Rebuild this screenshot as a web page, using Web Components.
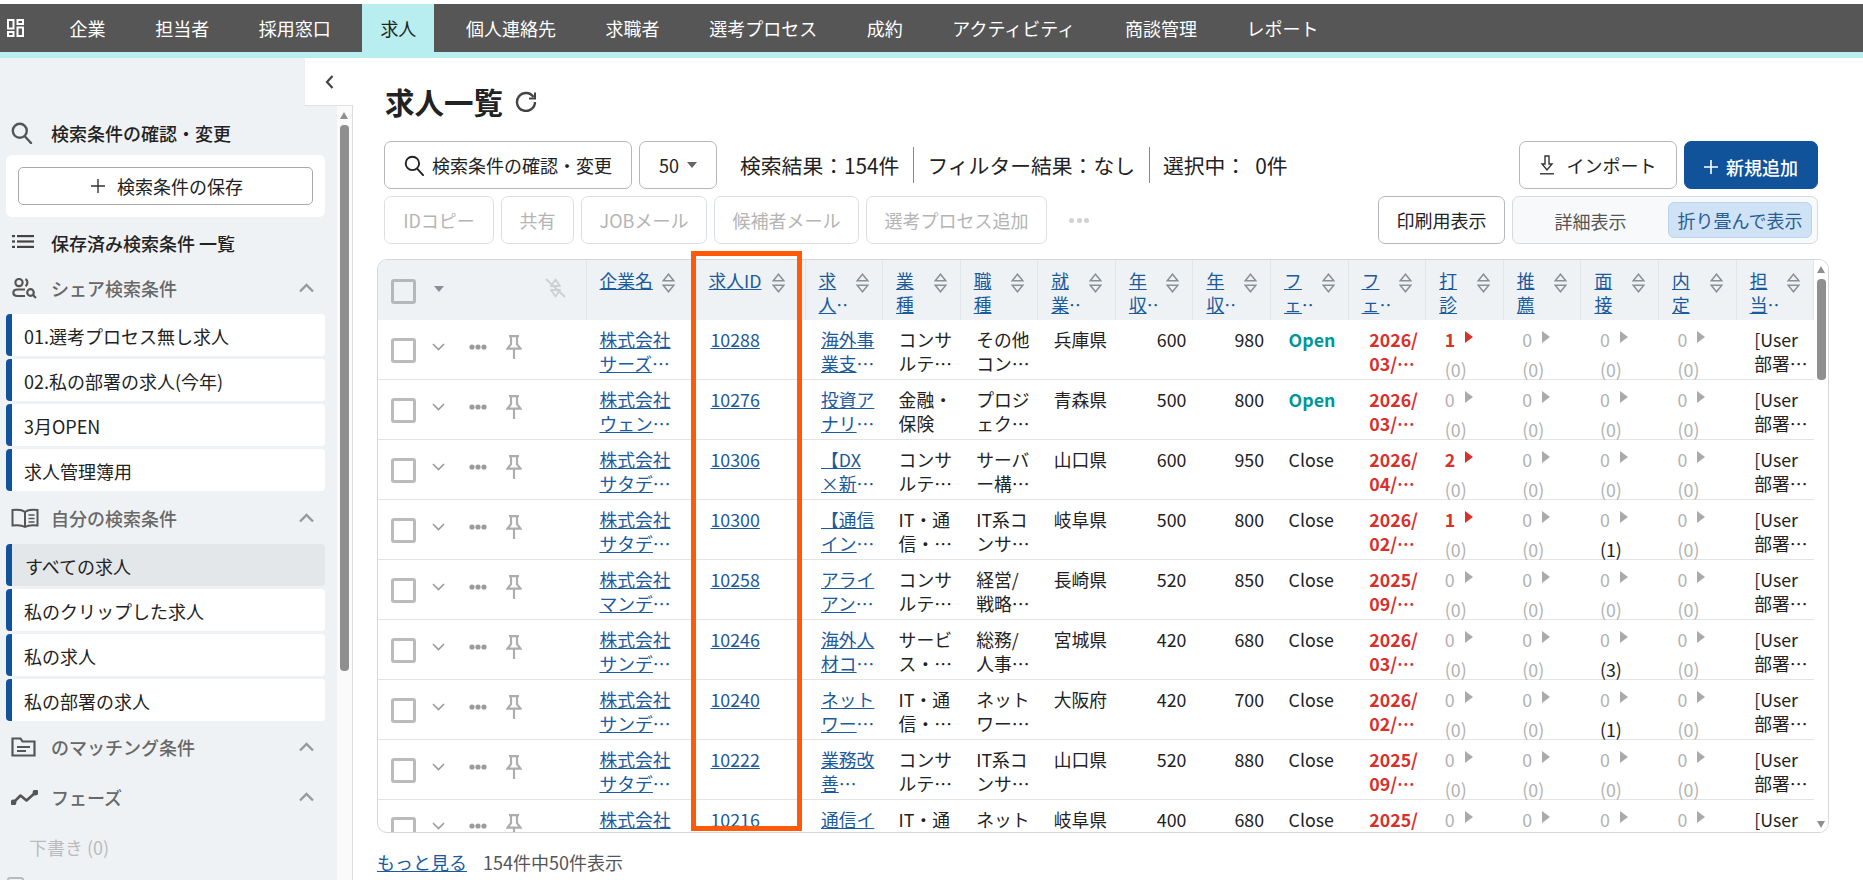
<!DOCTYPE html>
<html lang="ja">
<head>
<meta charset="utf-8">
<title>求人一覧</title>
<style>
  html, body { margin: 0; height: 880px; overflow: hidden; background: #fff; }
  body { font: 17.8px/24px "Noto Sans CJK JP", "Noto Sans", sans-serif; color: #222; }
</style>
</head>
<body>
<app-shell></app-shell>

<script>
const SEARCH_ICON = `<svg width="22" height="22" viewBox="0 0 22 22" fill="none" stroke="currentColor" stroke-width="2.4"><circle cx="8.8" cy="8.8" r="7"/><path d="M14 14.5l6 6.5" stroke-linecap="round"/></svg>`;
const CHEVRON_UP = `<svg width="15" height="10" viewBox="0 0 15 10" fill="none" stroke="#999" stroke-width="2.4"><path d="M1 8.5L7.5 2 14 8.5"/></svg>`;

const define = (tag, html, setup) => {
  customElements.define(tag, class extends HTMLElement {
    connectedCallback() {
      if (this.shadowRoot) return;
      this.attachShadow({ mode: "open" }).innerHTML = html;
      if (setup) setup(this);
    }
  });
};

define("nav-tab", `<style>
  :host { display: flex; align-items: center; padding: 0 18px; font-size: 18px; color: #fff; white-space: nowrap; }
  :host([active]) { background: #b8eef0; color: #222; }
</style><slot></slot>`);

define("top-nav", `<style>
  :host { display: flex; height: 48px; margin-top: 4px; background: #565656; border-bottom: 6px solid #b8eef0; gap: 13.6px; }
  .grid { display: flex; align-items: center; width: 45px; padding-left: 7px; margin-right: -7px; box-sizing: border-box; }
</style>
<div class="grid"><svg width="17" height="18" viewBox="0 0 17 18" fill="none" stroke="#fff" stroke-width="2"><rect x="1" y="1" width="5.5" height="8.5"/><rect x="10.5" y="1" width="5.5" height="4"/><rect x="1" y="13" width="5.5" height="4"/><rect x="10.5" y="8.5" width="5.5" height="8.5"/></svg></div>
<slot></slot>`);

define("side-head", `<style>
  :host { display: flex; align-items: center; height: 24px; padding: 0 23px 0 10px; font-weight: 500; color: #222; }
  :host([muted]) { color: #686868; }
  .icon { width: 41px; display: flex; align-items: center; padding-left: 1px; box-sizing: border-box; color: #555; flex: none; }
  .txt { flex: 1; white-space: nowrap; }
  .arrow { display: none; line-height: 0; }
  :host([muted]) .arrow { display: block; }
</style>
<div class="icon"><slot name="icon"></slot></div>
<div class="txt"><slot></slot></div>
<div class="arrow">${CHEVRON_UP}</div>`);

define("side-item", `<style>
  :host { display: flex; align-items: center; height: 42px; margin: 0 12px 3px 6px; padding-left: 12px; background: #fff; border-left: 6px solid #11539b; border-radius: 4px; white-space: nowrap; padding-top: 1px; box-sizing: border-box; }
  :host([active]) { background: #e4e7ea; padding-left: 13px; }
</style><slot></slot>`);

define("side-bar", `<style>
  :host { display: flex; width: 353px; flex: none; position: relative; height: 822px; overflow: hidden; font-size: 18px; }
  .body { width: 337px; flex: none; background: #eff2f5; padding-top: 63px; box-sizing: border-box; }
  .card { margin: 10px 12px 14px 6px; padding: 12px; height: 62px; box-sizing: border-box; background: #fff; border-radius: 6px; }
  .save { display: flex; align-items: center; justify-content: center; gap: 12px; height: 38px; padding-left: 5px; border: 1px solid #aaa; border-radius: 5px; box-sizing: border-box; }
  .save svg { margin-left: -2px; }
  .mt-1 { margin-top: 21px; margin-bottom: 14px; }
  .mt-2 { margin-top: 15px; margin-bottom: 14px; }
  .mt-3 { margin-top: 14px; }
  .mt-4 { margin-top: 26px; }
  .draft { margin: 26px 0 0 29px; color: #bbb; }
  .clip { margin: 18px 0 0 7px; width: 17px; height: 17px; box-sizing: border-box; border: 2px solid #bbb; border-radius: 3px; }
  .track { width: 16px; background: #fafafa; border-right: 1px solid #ddd; position: relative; display: flex; flex-direction: column; align-items: center; margin-top: 48px; box-sizing: border-box; padding-right: 1px; }
  .up { width: 0; height: 0; border: 4.5px solid transparent; border-top: 0; border-bottom: 7px solid #8f8f8f; margin-top: 6px; }
  .thumb { width: 9px; height: 546px; margin-top: 6px; background: #8f8f8f; border-radius: 4px; }
  .tab { position: absolute; left: 304px; top: 0; width: 49px; height: 48px; background: #fff; border-left: 1px solid #eee; border-bottom: 1px solid #e2e2e2; display: flex; align-items: center; justify-content: center; box-sizing: border-box; }
  svg { display: block; }
</style>
<div class="body">
  <side-head><span slot="icon">${SEARCH_ICON}</span>検索条件の確認・変更</side-head>
  <div class="card"><div class="save">
    <svg width="14" height="14" viewBox="0 0 14 14" stroke="#333" stroke-width="1.4"><path d="M7 0v14M0 7h14"/></svg><span>検索条件の保存</span>
  </div></div>
  <side-head><svg slot="icon" style="margin:-4px 0 0 1px" width="22" height="13" viewBox="0 0 22 13" fill="#444"><rect x="0" y="0" width="3" height="2.2"/><rect x="5" y="0" width="17" height="2.2"/><rect x="0" y="5.4" width="3" height="2.2"/><rect x="5" y="5.4" width="17" height="2.2"/><rect x="0" y="10.8" width="3" height="2.2"/><rect x="5" y="10.8" width="17" height="2.2"/></svg>保存済み検索条件 一覧</side-head>
  <side-head class="mt-1" muted><svg slot="icon" style="margin-left:1px" width="25" height="21" viewBox="0 0 25 21" fill="none" stroke="#555" stroke-width="2.2"><circle cx="7" cy="4.6" r="3.6"/><path d="M13.5 1c2.6 1.6 2.6 5.6 0 7.2"/><path d="M13 11.5H5.5c-5.5 0-5.5 6.5 0 6.5H13"/><circle cx="18.5" cy="14.5" r="3.3"/><path d="M21 17l3 3"/></svg>シェア検索条件</side-head>
  <side-item>01.選考プロセス無し求人</side-item>
  <side-item>02.私の部署の求人(今年)</side-item>
  <side-item>3月OPEN</side-item>
  <side-item>求人管理簿用</side-item>
  <side-head class="mt-2" muted><svg slot="icon" width="28" height="20" viewBox="0 0 28 20" fill="none" stroke="#555" stroke-width="2"><path d="M14 4C11 1.5 6 1.5 1.5 2v15.5c4.5-.5 9.5-.5 12.5 1.5 3-2 8-2 12.5-1.5V2C22 1.5 17 1.5 14 4zM14 4v15"/><path d="M17.5 7h6M17.5 10.5h6M17.5 14h6" stroke-width="1.5"/></svg>自分の検索条件</side-head>
  <side-item active>すべての求人</side-item>
  <side-item>私のクリップした求人</side-item>
  <side-item>私の求人</side-item>
  <side-item>私の部署の求人</side-item>
  <side-head class="mt-3" muted><svg slot="icon" width="25" height="20" viewBox="0 0 25 20" fill="none" stroke="#555" stroke-width="2.2"><path d="M1.5 18.5V1.5h8l2 3h12v14z"/><path d="M6 10h13M6 14h9"/></svg>のマッチング条件</side-head>
  <side-head class="mt-4" muted><svg slot="icon" width="27" height="15" viewBox="0 0 27 15" fill="none" stroke="#555" stroke-width="2.6" stroke-linejoin="round"><path d="M2.5 12.5l7-7 6 5 9-8"/><circle cx="2.5" cy="12.5" r="1.6" fill="#555"/><circle cx="24.5" cy="2.5" r="1.6" fill="#555"/></svg>フェーズ</side-head>
  <div class="draft">下書き (0)</div>
  <div class="clip"></div>
</div>
<div class="track"><div class="up"></div><div class="thumb"></div></div>
<div class="tab"><svg width="9" height="14" viewBox="0 0 9 14" fill="none" stroke="#444" stroke-width="2.2"><path d="M7.5 1L2 7l5.5 6"/></svg></div>`);

define("tool-btn", `<style>
  :host { display: inline-flex; align-items: center; justify-content: center; gap: 7px; height: 48px; box-sizing: border-box; border: 1px solid #b4b8bc; border-radius: 7px; background: #fff; white-space: nowrap; color: #222; flex: none; font-size: 18px; }
  :host([disabled]) { border-color: #dcdfe2; color: #b4b4b4; }
  :host([primary]) { background: #11539b; border-color: #11539b; color: #fff; font-weight: 500; }
  svg { display: block; }
</style><slot></slot>`);

define("view-toggle", `<style>
  :host { display: flex; align-items: center; width: 306px; height: 48px; box-sizing: border-box; border: 1px solid #d6dadd; border-radius: 7px; background: #f8f9fa; flex: none; font-size: 18px; }
  .off { width: 155px; text-align: center; color: #555; padding-top: 2px; }
  .on { width: 144px; height: 36px; line-height: 34px; box-sizing: border-box; text-align: center; color: #2a5d94; background: #cfe2f6; border: 1px solid #b8d4f0; border-radius: 6px; white-space: nowrap; }
</style><div class="off">詳細表示</div><div class="on">折り畳んで表示</div>`);

define("job-toolbar", `<style>
  :host { display: block; padding-left: 7px; padding-right: 45px; }
  .row { display: flex; align-items: center; gap: 7px; }
  .row + .row { margin-top: 7px; }
  .stat { display: flex; align-items: center; margin-left: 16px; flex: 1; white-space: nowrap; font-size: 20.8px; }
  .stat > span { padding: 0 14px 0 0; }
  .stat > span + span { padding-left: 13px; border-left: 1px solid #888; line-height: 36px; }
  .z { margin-left: 9px; }
  .dots { display: flex; gap: 2.5px; margin-left: 15px; flex: 1; }
  .dots i { width: 5px; height: 5px; border-radius: 50%; background: #d2d2d2; }
  .tri { width: 0; height: 0; border: 5px solid transparent; border-top: 6px solid #666; border-bottom: 0; margin-left: 1px; }
</style>
<div class="row">
  <tool-btn style="width:248px">${SEARCH_ICON.replace('width="22" height="22"', 'width="21" height="21"').replace('stroke-width="2.4"', 'stroke-width="2"')}検索条件の確認・変更</tool-btn>
  <tool-btn style="width:78px">50<span class="tri"></span></tool-btn>
  <div class="stat"><span>検索結果：154件</span><span>フィルター結果：なし</span><span>選択中：<span class="z">0件</span></span></div>
  <tool-btn style="width:158px;gap:13px"><svg width="14" height="20" viewBox="0 0 14 20" fill="none" stroke="#333" stroke-width="1.4"><path d="M5 1h4v8h3l-5 6-5-6h3z"/><path d="M0 18.8h14"/></svg>インポート</tool-btn>
  <tool-btn primary style="width:134px;gap:8px;padding-top:3px"><svg width="14" height="14" viewBox="0 0 14 14" stroke="#fff" stroke-width="1.6"><path d="M7 0v14M0 7h14"/></svg>新規追加</tool-btn>
</div>
<div class="row">
  <tool-btn disabled style="width:110px">IDコピー</tool-btn>
  <tool-btn disabled style="width:73px">共有</tool-btn>
  <tool-btn disabled style="width:126px">JOBメール</tool-btn>
  <tool-btn disabled style="width:145px">候補者メール</tool-btn>
  <tool-btn disabled style="width:181px">選考プロセス追加</tool-btn>
  <div class="dots"><i></i><i></i><i></i></div>
  <tool-btn style="width:127px">印刷用表示</tool-btn>
  <view-toggle></view-toggle>
</div>`);

// the ellipsis of a truncated link is not underlined; in a header the narrow column cuts it off
define("cut-dots", `<style>
  :host { display: inline-block; width: 12px; height: 24px; overflow: hidden; vertical-align: top; }
  :host([full]) { width: auto; }
</style><slot></slot>`);

define("sort-head", `<style>
  :host { display: flex; padding: 8px 13px 0 13px; box-sizing: border-box; height: 60px; border-right: 1px solid #e3e6e9; min-width: 0; }
  :host([wide]) { padding-right: 20px; }
  a { flex: 1; min-width: 0; color: #1b5a9c; line-height: 24px; white-space: nowrap; text-decoration: underline; }
  svg { flex: none; margin: 5px 0 0 6px; display: block; }
</style>
<a><slot></slot></a>
<svg width="13" height="20" viewBox="0 0 13 20" fill="none" stroke="#8a9096" stroke-width="1.5"><path d="M6.5 1.2l5.3 6.6H1.2z"/><path d="M6.5 18.8l5.3-6.6H1.2z"/></svg>`);

define("row-tools", `<style>
  :host { display: flex; align-items: center; padding-left: 12.5px; height: 100%; }
  .box { width: 25px; height: 25px; box-sizing: border-box; border: 3px solid #bbb; border-radius: 3px; flex: none; }
  .up { margin-top: -7px; display: block; flex: none; }
</style>
<div class="box"></div>
<svg class="up" style="margin-left:16px" width="13" height="8" viewBox="0 0 13 8" fill="none" stroke="#9a9a9a" stroke-width="1.6"><path d="M1 1l5.5 5.5L12 1"/></svg>
<svg class="up" style="margin-left:24.5px" width="18" height="6" viewBox="0 0 18 6" fill="#9b9b9b"><circle cx="3" cy="3" r="2.6"/><circle cx="9" cy="3" r="2.6"/><circle cx="15" cy="3" r="2.6"/></svg>
<svg class="up" style="margin-left:19px" width="16" height="24" viewBox="0 0 16 24" fill="none" stroke="#adadad" stroke-width="2.2"><path d="M3 1.1h10M5 1.1v8l-3.5 4.5h13L11 9.100V1.100"/><path d="M8 13.600V24"/></svg>`);

define("head-tools", `<style>
  :host { display: flex; align-items: center; padding-left: 13px; height: 60px; border-right: 1px solid #e3e6e9; box-sizing: border-box; }
  .box { width: 25px; height: 25px; box-sizing: border-box; border: 3px solid #b5b8ba; border-radius: 3px; flex: none; margin-top: 3px; }
  .tri { width: 0; height: 0; border: 5px solid transparent; border-top: 6px solid #8a9096; border-bottom: 0; margin: -2px 0 0 18px; }
  svg { margin: -4px 20px 0 auto; display: block; }
</style>
<div class="box"></div><div class="tri"></div>
<svg width="21" height="20" viewBox="0 0 21 20" fill="none" stroke="#cdd0d3" stroke-width="1.8" stroke-linejoin="round"><path d="M10.5 1.5L15 8H6zM10.5 18.5L15 12H6z"/><path d="M1 1l19 18"/></svg>`);

define("count-cell", `<style>
  :host { display: block; padding: 7px 0 0 18.5px; line-height: 24px; color: #b2b2b2; }
  :host([hot]) .n { color: #d9302c; font-weight: 700; }
  :host([hot]) i { border-left-color: #d9302c; }
  .top { display: flex; align-items: flex-start; gap: 10px; height: 24px; }
  i { flex: none; width: 0; height: 0; margin-top: 4px; border-style: solid; border-width: 6.5px 0 6.5px 8px; border-color: transparent transparent transparent #aaa; }
  .sub { margin-top: 6px; }
  :host([done]) .sub { color: #222; }
</style>
<div class="top"><span class="n"></span><i></i></div><div class="sub"></div>`, el => {
  el.shadowRoot.querySelector(".n").textContent = el.getAttribute("n");
  const sub = el.getAttribute("sub");
  if (sub !== null) el.shadowRoot.querySelector(".sub").textContent = `(${sub})`;
});

define("text-cell", `<style>
  :host { display: block; padding: 7px 8px 0 15.5px; min-width: 0; overflow: hidden; word-break: break-all; line-height: 24px; }
  :host([kind=company]) { padding: 7px 16px 0 13px; }
  :host([kind=id]) { padding-left: 15px; }
  :host([kind=num]) { padding-left: 0; padding-right: 7px; text-align: right; }
  :host([kind=date]) { padding-left: 20.5px; padding-right: 3px; color: #d9302c; font-weight: 700; }
  :host([kind=open]) { padding-left: 17.5px; padding-right: 0; color: #00979c; font-weight: 700; }
  :host([kind=close]) { padding-left: 17.5px; padding-right: 0; }
  :host([kind=user]) { padding-left: 17.5px; padding-right: 0; }
  :host([link]) { color: #1b5a9c; text-decoration: underline; }
</style><slot></slot>`);

define("job-row", `<style>
  :host { display: grid; grid-template-columns: var(--cols); height: 60px; border-bottom: 1px solid #e3e3e3; box-sizing: border-box; flex: none; }
</style><slot></slot>`);

const NONE = [[0, 0], [0, 0], [0, 0], [0, 0]];
const ROWS = [
  ["株式会社サーズ…", "10288", "海外事業支…", "コンサルテ…", "その他コン…", "兵庫県", 600, 980, "Open", "2026/03/…", [[1, 0], [0, 0], [0, 0], [0, 0]], "[User 部署…"],
  ["株式会社ウェン…", "10276", "投資アナリ…", "金融・保険", "プロジェク…", "青森県", 500, 800, "Open", "2026/03/…", NONE, "[User 部署…"],
  ["株式会社サタデ…", "10306", "【DX×新…", "コンサルテ…", "サーバー構…", "山口県", 600, 950, "Close", "2026/04/…", [[2, 0], [0, 0], [0, 0], [0, 0]], "[User 部署…"],
  ["株式会社サタデ…", "10300", "【通信イン…", "IT・通信・…", "IT系コンサ…", "岐阜県", 500, 800, "Close", "2026/02/…", [[1, 0], [0, 0], [0, 1], [0, 0]], "[User 部署…"],
  ["株式会社マンデ…", "10258", "アライアン…", "コンサルテ…", "経営/戦略…", "長崎県", 520, 850, "Close", "2025/09/…", NONE, "[User 部署…"],
  ["株式会社サンデ…", "10246", "海外人材コ…", "サービス・…", "総務/人事…", "宮城県", 420, 680, "Close", "2026/03/…", [[0, 0], [0, 0], [0, 3], [0, 0]], "[User 部署…"],
  ["株式会社サンデ…", "10240", "ネットワー…", "IT・通信・…", "ネットワー…", "大阪府", 420, 700, "Close", "2026/02/…", [[0, 0], [0, 0], [0, 1], [0, 0]], "[User 部署…"],
  ["株式会社サタデ…", "10222", "業務改善…", "コンサルテ…", "IT系コンサ…", "山口県", 520, 880, "Close", "2025/09/…", NONE, "[User 部署…"],
  // only the first line of the last row is above the bottom of the table
  ["株式会社", "10216", "通信イ", "IT・通", "ネット", "岐阜県", 400, 680, "Close", "2025/", [[0], [0], [0], [0]], "[User"]
];
const DOTS = "<cut-dots>…</cut-dots>";
const HEADS = ["企業名", "求人ID", `求<br>人${DOTS}`, "業<br>種", "職<br>種", `就<br>業${DOTS}`, `年<br>収${DOTS}`, `年<br>収${DOTS}`, `フ<br>ェ${DOTS}`, `フ<br>ェ${DOTS}`, "打<br>診", "推<br>薦", "面<br>接", "内<br>定", `担<br>当${DOTS}`];

const countHtml = c => `<count-cell n="${c[0]}" ${c[1] === undefined ? "" : `sub="${c[1]}"`} ${c[0] ? "hot" : ""} ${c[1] ? "done" : ""}></count-cell>`;
const linkText = s => s.replace("…", "<cut-dots full>…</cut-dots>");

const rowHtml = r => `<job-row>
  <row-tools></row-tools>
  <text-cell kind="company" link>${linkText(r[0])}</text-cell>
  <text-cell kind="id" link>${r[1]}</text-cell>
  <text-cell link>${linkText(r[2])}</text-cell>
  <text-cell>${r[3]}</text-cell>
  <text-cell>${r[4]}</text-cell>
  <text-cell>${r[5]}</text-cell>
  <text-cell kind="num">${r[6]}</text-cell>
  <text-cell kind="num">${r[7]}</text-cell>
  <text-cell kind="${r[8].toLowerCase()}">${r[8]}</text-cell>
  <text-cell kind="date">${r[9]}</text-cell>
  ${r[10].map(countHtml).join("")}
  <text-cell kind="user">${r[11]}</text-cell>
</job-row>`;

define("job-table", `<style>
  :host { display: flex; position: relative; height: 574px; width: 1452px; box-sizing: border-box; --cols: 208.5px 109px 110px repeat(13, 77.6px); }
  .frame { display: flex; width: 100%; border: 1px solid #d4d6d8; border-radius: 10px; overflow: hidden; box-sizing: border-box; }
  .grid { width: 1436.3px; flex: none; display: flex; flex-direction: column; overflow: hidden; }
  .head { display: grid; grid-template-columns: var(--cols); background: #eef2f5; height: 60px; flex: none; }
  .bar { flex: 1; position: relative; display: flex; flex-direction: column; align-items: center; background: #fff; }
  .up, .down { width: 0; height: 0; border: 4.5px solid transparent; }
  .up { border-top: 0; border-bottom: 7px solid #8f8f8f; margin-top: 6px; }
  .down { border-bottom: 0; border-top: 7px solid #8f8f8f; margin-top: auto; margin-bottom: 4px; }
  .thumb { width: 9px; height: 101px; margin-top: 6px; background: #8f8f8f; border-radius: 4px; }
  .mark { position: absolute; left: 314px; top: -8px; width: 111px; height: 580px; border: 5px solid #ff5a0a; box-sizing: border-box; pointer-events: none; }
</style>
<div class="frame">
  <div class="grid">
    <div class="head">
      <head-tools></head-tools>
      ${HEADS.map((h, i) => `<sort-head ${i < 2 ? "wide" : ""}>${h}</sort-head>`).join("")}
    </div>
    ${ROWS.map(rowHtml).join("")}
  </div>
  <div class="bar"><div class="up"></div><div class="thumb"></div><div class="down"></div></div>
</div>
<div class="mark"></div>`);

define("job-page", `<style>
  :host { display: block; flex: 1; padding: 0 0 0 24px; min-width: 0; }
  h1 { display: flex; align-items: center; gap: 12px; margin: 0; height: 83px; padding: 7px 0 4px 8px; box-sizing: border-box; font-size: 29.5px; font-weight: 700; line-height: 40px; color: #222; }
  job-table { margin-top: 15px; }
  .foot { display: flex; gap: 16px; margin-top: 17px; font-size: 18px; }
  .foot a { color: #1b5a9c; text-decoration: underline; }
  .foot span { color: #555; }
</style>
<h1>求人一覧<svg width="22" height="22" viewBox="0 0 22 22" fill="none" stroke="#444" stroke-width="2.4"><path d="M18.5 7A9 9 0 1 0 20 12"/><path d="M20 2.5v6h-6" stroke-width="2"/></svg></h1>
<job-toolbar></job-toolbar>
<job-table></job-table>
<div class="foot"><a>もっと見る</a><span>154件中50件表示</span></div>`);

define("app-shell", `<style>
  :host { display: block; height: 880px; overflow: hidden; }
  .main { display: flex; }
</style>
<top-nav>
  <nav-tab>企業</nav-tab><nav-tab>担当者</nav-tab><nav-tab>採用窓口</nav-tab><nav-tab active>求人</nav-tab><nav-tab>個人連絡先</nav-tab><nav-tab>求職者</nav-tab><nav-tab>選考プロセス</nav-tab><nav-tab>成約</nav-tab><nav-tab>アクティビティ</nav-tab><nav-tab>商談管理</nav-tab><nav-tab>レポート</nav-tab>
</top-nav>
<div class="main"><side-bar></side-bar><job-page></job-page></div>`);
</script>
</body>
</html>
